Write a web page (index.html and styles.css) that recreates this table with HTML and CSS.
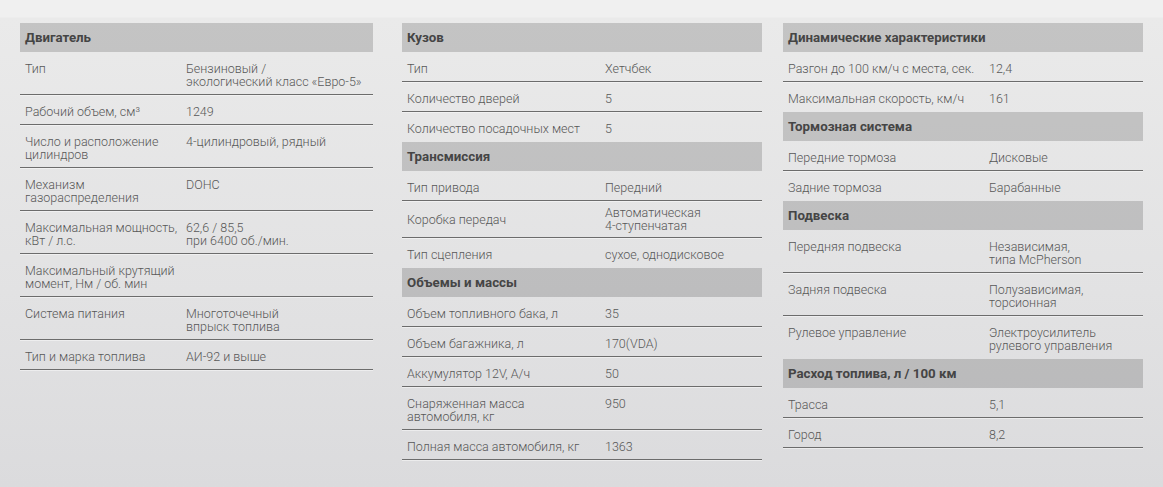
FILE: index.html
```html
<!DOCTYPE html>
<html lang="ru">
<head>
<meta charset="utf-8">
<title>Технические характеристики</title>
<link rel="stylesheet" href="styles.css">
</head>
<body>
<main class="specs">
  <div class="col col--engine">
    <section class="section">
      <h2 class="section-title">Двигатель</h2>
      <div class="row"><div class="label">Тип</div><div class="value">Бензиновый /<br>экологический класс «Евро-5»</div></div>
      <div class="row"><div class="label">Рабочий объем, см³</div><div class="value">1249</div></div>
      <div class="row"><div class="label">Число и расположение<br>цилиндров</div><div class="value">4-цилиндровый, рядный</div></div>
      <div class="row"><div class="label">Механизм<br>газораспределения</div><div class="value">DOHC</div></div>
      <div class="row"><div class="label">Максимальная мощность,<br>кВт / л.с.</div><div class="value">62,6 / 85,5<br>при 6400 об./мин.</div></div>
      <div class="row"><div class="label">Максимальный крутящий<br>момент, Нм / об. мин</div><div class="value"></div></div>
      <div class="row"><div class="label">Система питания</div><div class="value">Многоточечный<br>впрыск топлива</div></div>
      <div class="row"><div class="label">Тип и марка топлива</div><div class="value">АИ-92 и выше</div></div>
    </section>
  </div>

  <div class="col col--body">
    <section class="section">
      <h2 class="section-title">Кузов</h2>
      <div class="row"><div class="label">Тип</div><div class="value">Хетчбек</div></div>
      <div class="row"><div class="label">Количество дверей</div><div class="value">5</div></div>
      <div class="row"><div class="label">Количество посадочных мест</div><div class="value">5</div></div>
    </section>
    <section class="section">
      <h2 class="section-title">Трансмиссия</h2>
      <div class="row"><div class="label">Тип привода</div><div class="value">Передний</div></div>
      <div class="row row--compact"><div class="label">Коробка передач</div><div class="value">Автоматическая<br>4-ступенчатая</div></div>
      <div class="row"><div class="label">Тип сцепления</div><div class="value">сухое, однодисковое</div></div>
    </section>
    <section class="section">
      <h2 class="section-title">Объемы и массы</h2>
      <div class="row"><div class="label">Объем топливного бака, л</div><div class="value">35</div></div>
      <div class="row"><div class="label">Объем багажника, л</div><div class="value">170(VDA)</div></div>
      <div class="row"><div class="label">Аккумулятор 12V, А/ч</div><div class="value">50</div></div>
      <div class="row"><div class="label">Снаряженная масса<br>автомобиля, кг</div><div class="value">950</div></div>
      <div class="row"><div class="label">Полная масса автомобиля, кг</div><div class="value">1363</div></div>
    </section>
  </div>

  <div class="col col--dyn">
    <section class="section">
      <h2 class="section-title">Динамические характеристики</h2>
      <div class="row"><div class="label">Разгон до 100 км/ч с места, сек.</div><div class="value">12,4</div></div>
      <div class="row"><div class="label">Максимальная скорость, км/ч</div><div class="value">161</div></div>
    </section>
    <section class="section">
      <h2 class="section-title">Тормозная система</h2>
      <div class="row"><div class="label">Передние тормоза</div><div class="value">Дисковые</div></div>
      <div class="row"><div class="label">Задние тормоза</div><div class="value">Барабанные</div></div>
    </section>
    <section class="section">
      <h2 class="section-title">Подвеска</h2>
      <div class="row"><div class="label">Передняя подвеска</div><div class="value">Независимая,<br>типа McPherson</div></div>
      <div class="row"><div class="label">Задняя подвеска</div><div class="value">Полузависимая,<br>торсионная</div></div>
      <div class="row"><div class="label">Рулевое управление</div><div class="value">Электроусилитель<br>рулевого управления</div></div>
    </section>
    <section class="section">
      <h2 class="section-title">Расход топлива, л / 100 км</h2>
      <div class="row"><div class="label">Трасса</div><div class="value">5,1</div></div>
      <div class="row"><div class="label">Город</div><div class="value">8,2</div></div>
    </section>
  </div>
</main>
</body>
</html>
```
FILE: styles.css
```css
html, body {
  margin: 0;
  padding: 0;
}

body {
  min-height: 487px;
  background: linear-gradient(to bottom, #f0f0f0 0, #f0f0f0 17px, #eaeaea 18px, #e2e2e3 60%, #dbdbdd 100%);
  font-family: Roboto, "Liberation Sans", sans-serif;
  font-weight: 300;
  font-size: 12.5px;
  color: #585858;
}

.specs {
  display: flex;
  align-items: flex-start;
  padding: 23px 0 0 20px;
}

.col--engine {
  width: 353px;
  margin-right: 29px;
}

.col--body {
  width: 360px;
  margin-right: 21px;
}

.col--dyn {
  width: 360px;
}

.section-title {
  margin: 0;
  height: 29px;
  line-height: 30px;
  padding-left: 5px;
  background: rgba(0, 0, 0, 0.16);
  font-size: 13.3px;
  font-weight: 700;
  color: #454545;
}

.row {
  display: grid;
  align-items: start;
  padding: 10px 0 6px;
  line-height: 13px;
  border-bottom: 1px solid #6c6c6c;
  box-shadow: 0 1px 0 rgba(255, 255, 255, 0.45);
}

.section:not(:last-child) .row:last-child {
  border-bottom-color: transparent;
  box-shadow: none;
}

.col--engine .row {
  grid-template-columns: 166px 1fr;
}

.col--body .row {
  grid-template-columns: 203px 1fr;
}

.col--dyn .row {
  grid-template-columns: 206px 1fr;
}

.row--compact {
  padding: 5px 0 5px;
  align-items: center;
}

.label {
  padding-left: 5px;
  white-space: nowrap;
}

.value {
  white-space: nowrap;
}
```
